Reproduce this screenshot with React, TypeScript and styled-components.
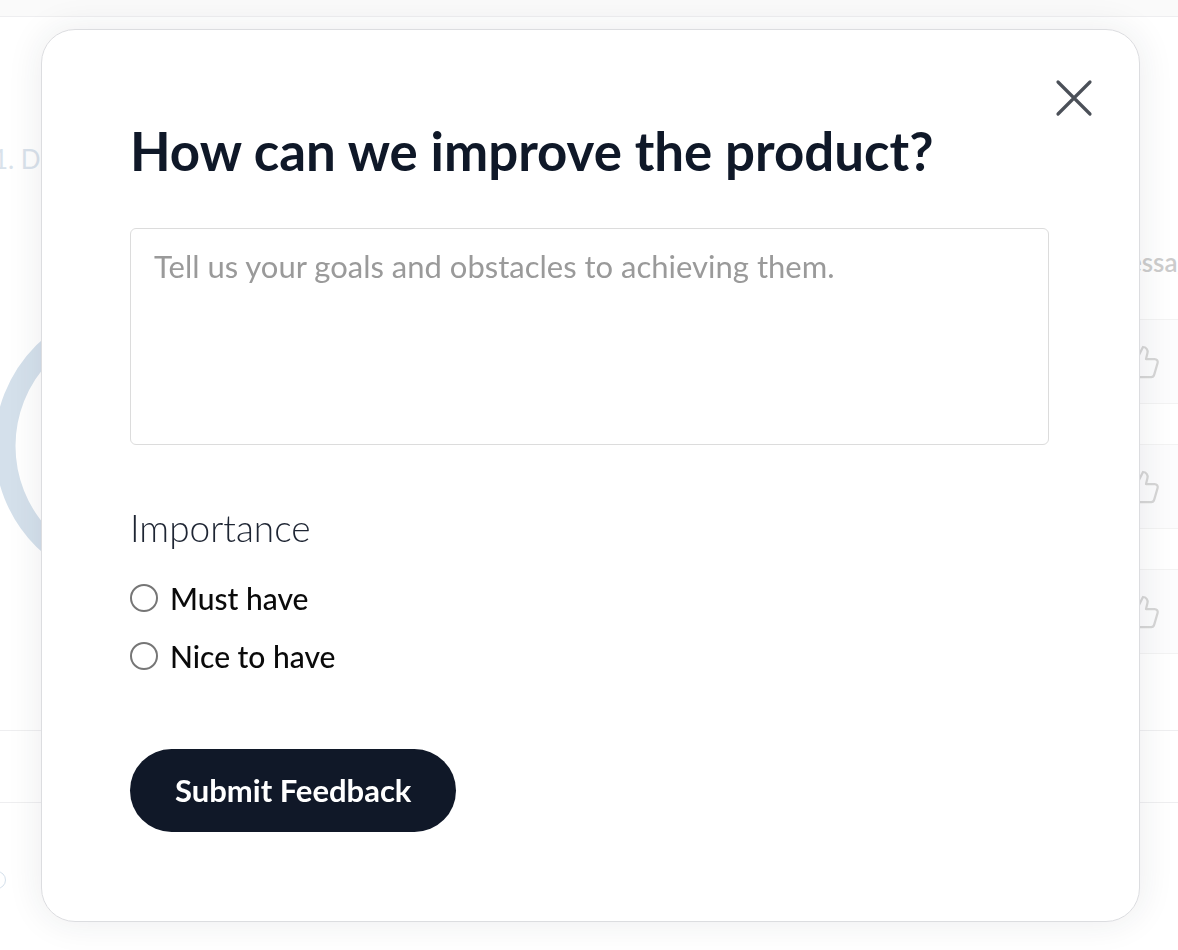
import { useState } from "react";
import styled, { createGlobalStyle } from "styled-components";
import { ThumbsUp } from "lucide-react";

const GlobalStyle = createGlobalStyle`
  html, body {
    margin: 0;
    padding: 0;
    background: #ffffff;
  }
  body {
    font-family: "Lato", "Inter", "Liberation Sans", sans-serif;
    overflow: hidden;
  }
  * {
    box-sizing: border-box;
  }
`;

const cards = [1, 2, 3];

export default function App(): JSX.Element {
  const [importance, setImportance] = useState("");
  const [text, setText] = useState("");

  return (
    <>
      <GlobalStyle />
      <Page>
        <TopBar />
        <Body>
          <LeftCol>
            <SectionTitle>1. Distribution</SectionTitle>
            <Donut width="300" height="300" viewBox="0 0 300 300">
              <circle
                cx="150"
                cy="150"
                r="132"
                fill="none"
                stroke="#cddbe8"
                strokeWidth="21"
              />
            </Donut>
          </LeftCol>
          <RightCol>
            <SectionHeading>Messages</SectionHeading>
            <CardList>
              {cards.map((c) => (
                <Card key={c}>
                  <ThumbsUp size={36} color="#cfcfcf" strokeWidth={1.5} />
                </Card>
              ))}
            </CardList>
          </RightCol>
        </Body>
        <TableRow />
        <TableRow>
          <Dot />
        </TableRow>
      </Page>

      <Overlay>
        <Modal>
          <CloseButton aria-label="Close">
            <svg width="40" height="40" viewBox="0 0 40 40">
              <path
                d="M4 4 L36 36 M36 4 L4 36"
                stroke="#4b5058"
                strokeWidth="3.2"
                strokeLinecap="round"
              />
            </svg>
          </CloseButton>
          <Title>How can we improve the product?</Title>
          <FeedbackInput
            placeholder="Tell us your goals and obstacles to achieving them."
            value={text}
            onChange={(e) => setText(e.target.value)}
          />
          <FieldLabel>Importance</FieldLabel>
          <RadioGroup>
            {["Must have", "Nice to have"].map((opt) => (
              <RadioRow key={opt}>
                <Radio
                  type="radio"
                  name="importance"
                  checked={importance === opt}
                  onChange={() => setImportance(opt)}
                />
                <span>{opt}</span>
              </RadioRow>
            ))}
          </RadioGroup>
          <SubmitButton>Submit Feedback</SubmitButton>
        </Modal>
      </Overlay>
    </>
  );
}

const Page = styled.div`
  width: 100%;
  height: 950px;
  overflow: hidden;
  background: #ffffff;
`;

const TopBar = styled.div`
  height: 17px;
  border-bottom: 1px solid #ececee;
  background: #fafafa;
`;

const Body = styled.div`
  height: 713px;
  display: flex;
  justify-content: space-between;
`;

const LeftCol = styled.div`
  width: 200px;
  margin-left: -7px;
  padding-top: 127px;
  display: flex;
  flex-direction: column;
`;

const SectionTitle = styled.div`
  font-size: 26px;
  line-height: 1.2;
  color: #d3dde8;
  white-space: nowrap;
`;

const Donut = styled.svg`
  margin-top: 121px;
  margin-left: -6px;
  flex-shrink: 0;
`;

const RightCol = styled.div`
  width: 260px;
  margin-right: -182px;
  padding-top: 230px;
  display: flex;
  flex-direction: column;
`;

const SectionHeading = styled.div`
  margin-left: 4px;
  font-size: 26px;
  line-height: 1.2;
  font-weight: 600;
  color: #c4c4c4;
  white-space: nowrap;
`;

const CardList = styled.div`
  margin-top: 41px;
  margin-left: 20px;
  display: flex;
  flex-direction: column;
  gap: 40px;
`;

const Card = styled.div`
  height: 85px;
  border: 1px solid #f1f1f1;
  border-radius: 10px;
  background: #fcfcfd;
  display: flex;
  align-items: center;
  padding-left: 4px;
`;

const TableRow = styled.div`
  height: 72px;
  border-top: 1px solid #ececee;
  position: relative;
`;

const Dot = styled.div`
  position: absolute;
  left: -12px;
  top: 68px;
  width: 18px;
  height: 18px;
  border: 1.5px solid #cddbe8;
  border-radius: 50%;
`;

const Overlay = styled.div`
  position: fixed;
  inset: 0;
  padding-left: 3px;
  display: flex;
  align-items: center;
  justify-content: center;
  background: rgba(255, 255, 255, 0.15);
`;

const Modal = styled.div`
  position: relative;
  width: 1099px;
  height: 893px;
  padding: 90px 90px 89px 88px;
  background: #ffffff;
  border: 1px solid #dcdde0;
  border-radius: 34px;
  box-shadow: 0 0 36px rgba(30, 40, 60, 0.09);
  display: flex;
  flex-direction: column;
  align-items: flex-start;
`;

const CloseButton = styled.button`
  position: absolute;
  top: 48px;
  right: 45px;
  width: 40px;
  height: 40px;
  padding: 0;
  border: none;
  background: transparent;
  cursor: pointer;
  display: flex;
`;

const Title = styled.h2`
  margin: 0;
  font-size: 52.8px;
  line-height: 62px;
  font-weight: 700;
  color: #0f1828;
`;

const FeedbackInput = styled.textarea`
  margin-top: 46px;
  width: 100%;
  height: 218px;
  padding: 19px 23px;
  border: 1.5px solid #dcdcdc;
  border-radius: 6px;
  font-family: inherit;
  font-size: 31px;
  line-height: 1.2;
  color: #1e2533;
  resize: none;
  outline: none;

  &::placeholder {
    color: #9a9a9a;
  }
`;

const FieldLabel = styled.div`
  margin-top: 61px;
  font-size: 37px;
  line-height: 1.2;
  font-weight: 300;
  color: #1e2533;
`;

const RadioGroup = styled.div`
  margin-top: 27px;
  display: flex;
  flex-direction: column;
  gap: 18px;
`;

const RadioRow = styled.label`
  height: 40px;
  display: flex;
  align-items: center;
  gap: 12px;
  font-size: 30px;
  line-height: 1.2;
  font-weight: 500;
  color: #0a0a0a;
  cursor: pointer;
`;

const Radio = styled.input`
  appearance: none;
  margin: 0;
  width: 28px;
  height: 28px;
  border: 2px solid #767676;
  border-radius: 50%;
  background: #fff;
  cursor: pointer;

  &:checked {
    border-color: #101828;
    box-shadow: inset 0 0 0 5px #fff;
    background: #101828;
  }
`;

const SubmitButton = styled.button`
  margin-top: 73px;
  height: 83px;
  padding: 0 45px;
  border: none;
  border-radius: 42px;
  background: #101828;
  color: #ffffff;
  font-family: inherit;
  font-size: 31px;
  font-weight: 700;
  cursor: pointer;
`;
